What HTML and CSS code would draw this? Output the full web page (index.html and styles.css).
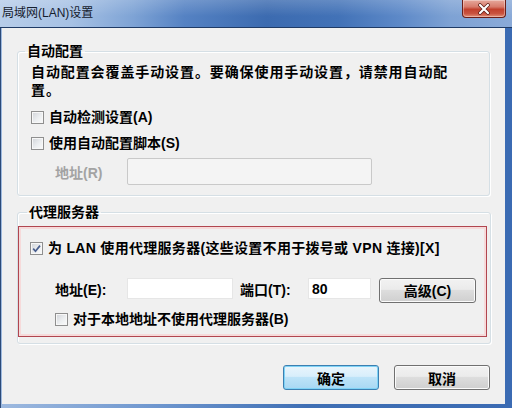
FILE: index.html
```html
<!DOCTYPE html>
<html lang="zh-CN">
<head>
<meta charset="utf-8">
<title>局域网(LAN)设置</title>
<link rel="stylesheet" href="styles.css">
</head>
<body>
<div class="window">
  <div class="titlebar">
    <span class="title">局域网(LAN)设置</span>
    <button class="close" type="button" aria-label="关闭">
      <svg width="14" height="12" viewBox="0 0 14 12">
        <path d="M3 2 L11 10 M11 2 L3 10" stroke="#5a1a14" stroke-width="3.6" stroke-linecap="round"/>
        <path d="M3 2 L11 10 M11 2 L3 10" stroke="#ffffff" stroke-width="2.2" stroke-linecap="round"/>
      </svg>
    </button>
  </div>
  <div class="client">
    <fieldset class="group group-auto">
      <legend>自动配置</legend>
      <p class="desc">自动配置会覆盖手动设置。要确保使用手动设置，请禁用自动配置。</p>
      <label class="check row-a"><span class="box"></span>自动检测设置(A)</label>
      <label class="check row-b"><span class="box"></span>使用自动配置脚本(S)</label>
      <div class="field-row disabled">
        <span class="field-label">地址(R)</span>
        <input class="text text-wide" type="text" disabled>
      </div>
    </fieldset>

    <fieldset class="group group-proxy">
      <legend>代理服务器</legend>
      <div class="highlight">
        <label class="check proxy-check"><span class="box"><svg width="11" height="11" viewBox="0 0 11 11"><path d="M2.2 5.6 L4.5 8.2 L9 2.6" fill="none" stroke="#4a5f8e" stroke-width="1.7"/></svg></span>为 LAN 使用代理服务器(这些设置不用于拨号或 VPN 连接)[X]</label>
        <div class="proxy-row">
          <span class="field-label addr">地址(E):</span>
          <input class="text text-addr" type="text">
          <span class="field-label port">端口(T):</span>
          <input class="text text-port" type="text" value="80">
          <button class="btn btn-adv" type="button">高级(C)</button>
        </div>
        <label class="check bypass"><span class="box"></span>对于本地地址不使用代理服务器(B)</label>
      </div>
    </fieldset>

    <div class="actions">
      <button class="btn btn-default" type="button">确定</button>
      <button class="btn" type="button">取消</button>
    </div>
  </div>
</div>
</body>
</html>
```

FILE: styles.css
```css
* { box-sizing: border-box; }

html, body {
  margin: 0;
  padding: 0;
}

body {
  width: 512px;
  height: 408px;
  overflow: hidden;
  font-family: "Liberation Sans", "Noto Sans CJK SC", sans-serif;
  font-size: 14px;
  font-weight: 700;
  color: #000;
  background: #4a79bd;
}

.window {
  width: 512px;
  height: 408px;
  display: flex;
  flex-direction: column;
  background: linear-gradient(90deg, #2c4a78 0, #2c4a78 1px, #9db9df 1px, #6f97cf 30%, #3f6fb4 60%, #3b6bb3 100%);
}

.titlebar {
  height: 28px;
  flex: none;
  display: flex;
  justify-content: space-between;
  align-items: flex-start;
  background:
    linear-gradient(180deg, rgba(255,255,255,0.18) 0%, rgba(255,255,255,0) 60%),
    linear-gradient(90deg, #b7cde9 0%, #a6c1e4 14%, #7ea3d5 26%, #5582c3 36%, #3c6bb0 52%, #4272b7 66%, #5d89c8 78%, #7ea2d4 88%, #8aaad8 100%);
  border-bottom: 1px solid #1f3b66;
}

.title {
  padding-left: 2px;
  font-size: 12px;
  font-weight: 400;
  line-height: 26px;
  color: #15202e;
}

.close {
  width: 44px;
  height: 18px;
  margin-right: 6px;
  padding: 0;
  display: flex;
  align-items: center;
  justify-content: center;
  border: 1px solid #6b1e18;
  border-top: none;
  border-radius: 0 0 4px 4px;
  background: linear-gradient(180deg, #e6a89c 0%, #d77b6c 40%, #c2402d 55%, #c9533f 80%, #e39079 100%);
  box-shadow: inset 0 0 0 1px rgba(255,255,255,0.35);
}

.client {
  flex: 1;
  margin: 0 7px 4px 2px;
  padding: 15px 15px 0 15px;
  background: #f0f0f0;
  display: flex;
  flex-direction: column;
}

.group {
  margin: 0;
  border: 1px solid #d5dfe5;
  border-radius: 3px;
  box-shadow: 1px 1px 0 #ffffff, inset 1px 1px 0 #ffffff;
}

.group legend {
  padding: 0 2px;
  line-height: 16px;
}

.group-auto {
  padding: 4px 13px 10px 13px;
}

.group-auto legend {
  margin-left: -6px;
}

.desc {
  margin: 0;
  width: 425px;
  line-height: 18px;
  letter-spacing: 0.9px;
}

.check {
  display: flex;
  align-items: center;
  height: 20px;
  line-height: 20px;
  white-space: nowrap;
}

.box {
  width: 13px;
  height: 13px;
  flex: none;
  margin-right: 5px;
  display: flex;
  align-items: center;
  justify-content: center;
  border: 1px solid #8f8f8f;
  background: linear-gradient(135deg, #d0d3d8 0%, #eceef0 55%, #fbfbfb 100%);
  box-shadow: inset 0 0 0 1px #f7f7f7;
}

.row-a { margin-top: 8px; }
.row-b { margin-top: 6px; }

.field-row {
  display: flex;
  align-items: center;
  margin-top: 5px;
  padding-left: 24px;
}

.field-label {
  white-space: nowrap;
}

.disabled .field-label {
  width: 72px;
  color: #a3a3a3;
}

.text {
  font: inherit;
  font-size: 14px;
  padding: 0 3px;
  margin: 0;
  outline: none;
}

.text-wide {
  width: 245px;
  height: 27px;
  border: 1px solid #c9c9c9;
  border-radius: 2px;
  background: #f4f4f4;
}

.group-proxy {
  margin-top: 8px;
  padding: 6px 3px 6px 0;
}

.group-proxy legend {
  margin-left: 9px;
}

.highlight {
  border: 1px solid #b14650;
  box-shadow: inset 0 0 0 2px #f6dada;
  padding: 11px 10px 7px 11px;
}

.proxy-check {
  letter-spacing: 0.3px;
}

.proxy-row {
  display: flex;
  align-items: center;
  height: 25px;
  margin-top: 18px;
  padding-left: 25px;
}

.addr { width: 72px; }
.port { width: 68px; margin-left: 7px; }

.text-addr,
.text-port {
  height: 21px;
  border: 1px solid #e6e6e6;
  background: #ffffff;
}

.text-addr { width: 106px; }
.text-port { width: 63px; }

.btn {
  width: 96px;
  height: 25px;
  padding: 0;
  font: inherit;
  font-size: 14px;
  font-weight: 700;
  color: #000;
  border: 1px solid #707070;
  border-radius: 3px;
  background: linear-gradient(180deg, #f2f2f2 0%, #ebebeb 45%, #dddddd 50%, #cfcfcf 100%);
  box-shadow: inset 0 0 0 1px #fbfbfb;
}

.btn-adv {
  width: 97px;
  height: 25px;
  margin-left: 8px;
  margin-top: 3px;
}

.bypass {
  margin-top: 8px;
  padding-left: 25px;
}

.actions {
  display: flex;
  justify-content: flex-end;
  gap: 15px;
  margin-top: 21px;
}

.btn-default {
  border-color: #3c7fb1;
  background: linear-gradient(180deg, #e9f5fc 0%, #d8eefb 45%, #bde3f8 50%, #a8d8f3 100%);
  box-shadow: inset 0 0 0 1px #7fd3f6;
}
```
